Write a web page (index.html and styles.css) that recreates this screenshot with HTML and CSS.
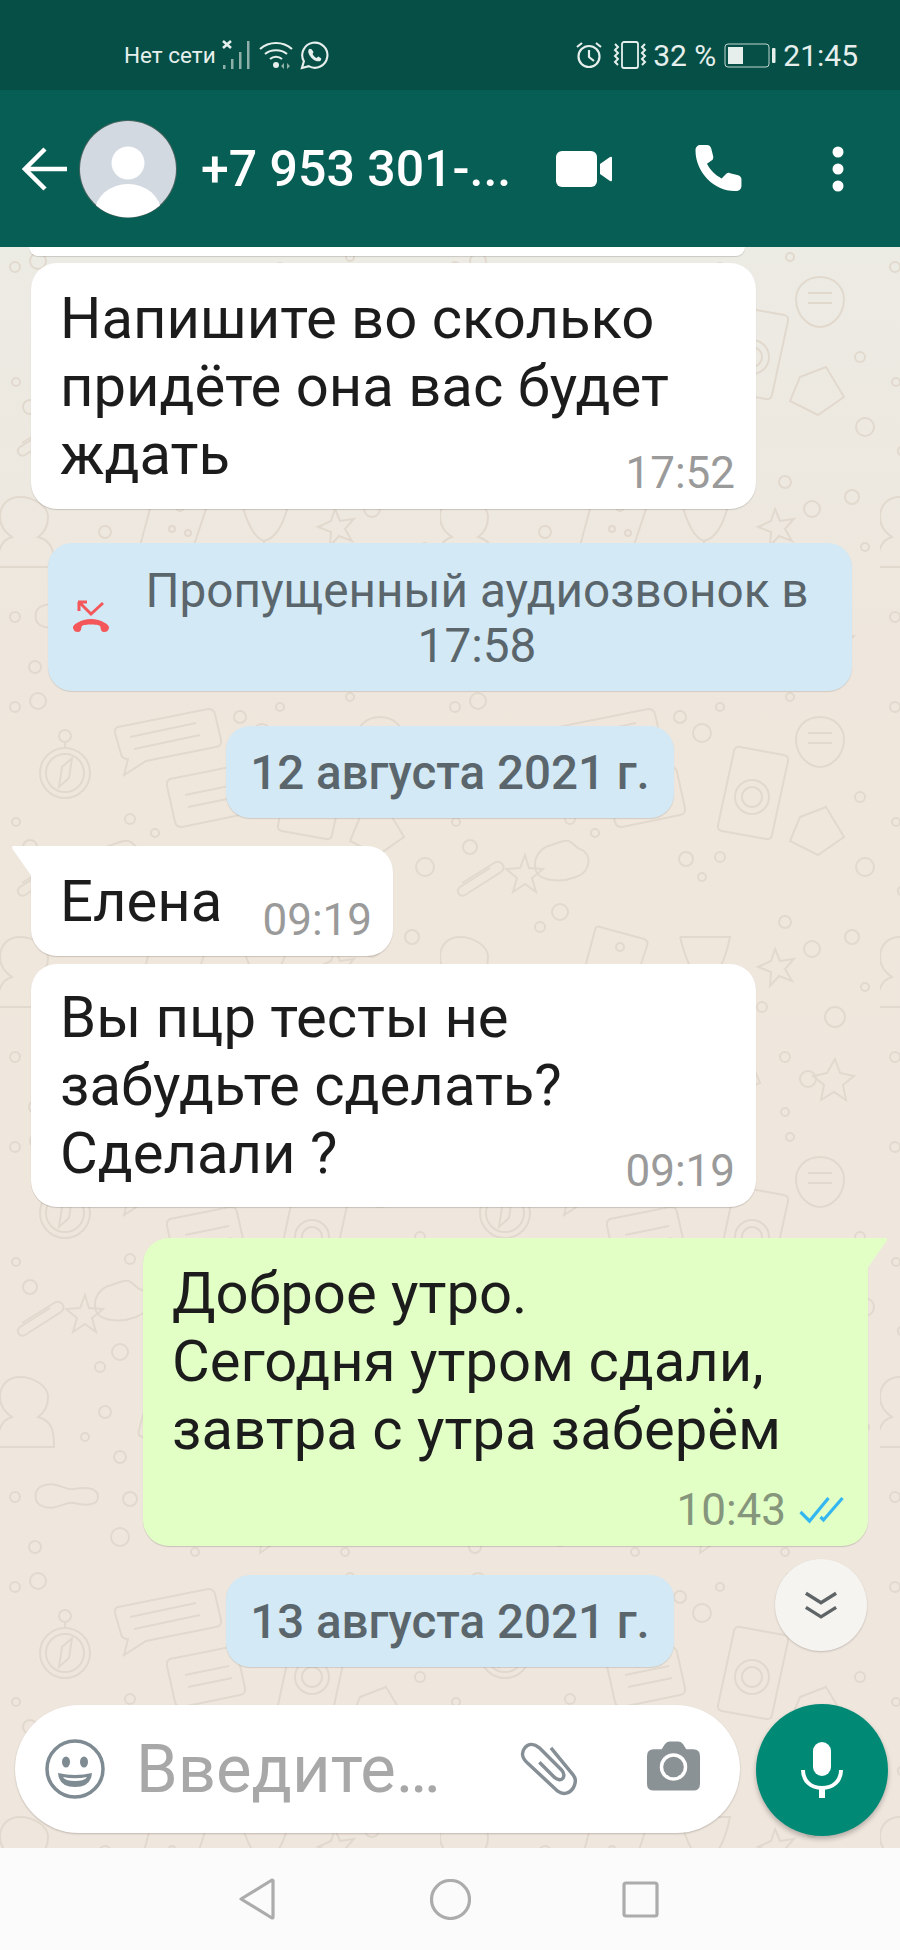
FILE: index.html
```html
<!DOCTYPE html>
<html lang="ru">
<head>
<meta charset="utf-8">
<title>WhatsApp</title>
<link rel="stylesheet" href="styles.css">
</head>
<body>
<div class="phone">
  <div class="status">
    <div class="status-left">
      <span class="status-net">Нет сети</span>
      <svg class="ic-signal" viewBox="0 0 30 30"><path d="M1 1l8 7M9 1L1 8" stroke="#e6efec" stroke-width="2.600"/><g fill="#8fb0a8"><rect x="1" y="25" width="2.500" height="4"/><rect x="9" y="19" width="2.500" height="10"/><rect x="17" y="12" width="2.500" height="17"/><rect x="25" y="1" width="2.500" height="28"/></g></svg>
      <svg class="ic-wifi" viewBox="0 0 34 28"><g fill="none" stroke="#e6efec" stroke-width="2.200"><path d="M1 8c9-8 23-8 32 0"/><path d="M6 13c6-5 16-5 22 0"/><path d="M11 18c3.500-3 8.500-3 12 0"/></g><circle cx="17" cy="24" r="3" fill="#e6efec"/><path d="M25 22v6l-3-3zM28 22v6l3-3z" fill="#8fb0a8"/></svg>
      <svg class="ic-wa" viewBox="0 0 30 30"><path d="M2 28l2-7A13 13 0 1 1 9 26z" fill="none" stroke="#e6efec" stroke-width="2.200"/><path d="M10 8c-2 1-2 4 0 7 2 3 5 6 9 6 2 0 3-1 3-3l-3-2-2 1.500c-2-1-3-2-4-4l1-2-2-3z" fill="#e6efec"/></svg>
    </div>
    <div class="status-right">
      <svg class="ic-alarm" viewBox="0 0 28 28"><circle cx="14" cy="15.500" r="10.500" fill="none" stroke="#e6efec" stroke-width="2.200"/><path d="M14 9v7l5 4M2 6l5-4M26 6l-5-4" fill="none" stroke="#e6efec" stroke-width="2.200"/></svg>
      <svg class="ic-vib" viewBox="0 0 36 28"><rect x="10" y="1" width="16" height="26" rx="2" fill="none" stroke="#e6efec" stroke-width="1.800"/><path d="M3 3l3 3-3 3 3 3-3 3 3 3-3 3 3 3M33 3l-3 3 3 3-3 3 3 3-3 3 3 3-3 3" fill="none" stroke="#e6efec" stroke-width="2"/></svg>
      <span class="status-pct">32 %</span>
      <svg class="ic-batt" viewBox="0 0 52 25"><rect x="1" y="1" width="44" height="23" rx="3" fill="none" stroke="#c3d6d1" stroke-width="1"/><rect x="4" y="4" width="15" height="17" fill="#e6efec"/><rect x="48" y="5" width="3.500" height="15" rx="1" fill="#e6efec"/></svg>
      <span class="status-time">21:45</span>
    </div>
  </div>

  <header class="topbar">
    <svg class="ic-back" viewBox="0 0 46 46"><path d="M3 23h42M23 3L3 23l20 20" fill="none" stroke="#fff" stroke-width="4.500"/></svg>
    <svg class="avatar" viewBox="0 0 98 98"><defs><clipPath id="av"><circle cx="49" cy="49" r="48.500"/></clipPath></defs><circle cx="49" cy="49" r="49" fill="#48645f"/><circle cx="49" cy="49" r="48" fill="#d2d9e0"/><circle cx="49" cy="43" r="16.500" fill="#fff"/><ellipse cx="49" cy="92" rx="33" ry="28" fill="#fff" clip-path="url(#av)"/></svg>
    <div class="contact">+7 953 301-...</div>
    <svg class="ic-video" viewBox="0 0 58 38"><rect x="1" y="1" width="41" height="36" rx="6" fill="#fff"/><path d="M45 14l10-7q2-1 2 1v22q0 2-2 1l-10-7z" fill="#fff"/></svg>
    <svg class="ic-phone" viewBox="3 1 45 45"><path d="M3 6c0-3 2-5 5-5h6c2 0 3 1 4 3l2 8c0 2 0 3-2 4l-4 3c3 6 8 11 14 14l4-4c1-1 2-2 4-1l8 2c2 1 3 2 3 4v6c0 3-2 5-5 5C22 46 3 28 3 6z" fill="#fff"/></svg>
    <svg class="ic-more" viewBox="0 0 12 46"><circle cx="6" cy="6" r="5.500" fill="#fff"/><circle cx="6" cy="23" r="5.500" fill="#fff"/><circle cx="6" cy="40" r="5.500" fill="#fff"/></svg>
  </header>

  <main class="chat">
    <svg class="wallpaper" width="900" height="1601" aria-hidden="true">
      <defs>
        <pattern id="doodle" width="440" height="440" patternUnits="userSpaceOnUse">
          <g fill="none" stroke="#e2d9ce" stroke-width="2">
            <circle cx="65" cy="86" r="25"/><circle cx="65" cy="86" r="19"/><path d="M59 100l3-20 10-9-3 20zM65 61v-6"/><circle cx="65" cy="49" r="6"/>
            <path d="M118 40l90-18q6 0 7 5l6 26q1 6-5 7l-70 14-22 14 4-16q-6 0-7-5l-6-21q-1-5 3-6zM130 50l66-14M134 62l66-14"/>
            <path d="M170 92l60-12q6 0 7 5l8 36q1 6-5 7l-58 12q-6 0-7-5l-8-36q-1-5 3-7zM185 108l44-9M188 120l44-9"/>
            <path d="M112 158c-12 2-20 14-16 26 4 10 24 12 40 6 16-6 16-24 4-28-6-2-8-10-16-8-8 2-8 2-12 4z"/>
            <path d="M85 168l4 13 14 1-11 9 4 14-11-8-12 8 4-14-11-9 14-1z"/>
            <path d="M22 196l32-20c7-4 13 4 7 9l-36 23c-5 3-10-4-5-8l30-19"/>
            <circle cx="15" cy="20" r="5"/><circle cx="38" cy="14" r="8"/><circle cx="16" cy="135" r="4"/><circle cx="30" cy="160" r="7"/><circle cx="130" cy="132" r="5"/><circle cx="155" cy="146" r="4"/>
            <circle cx="240" cy="30" r="6"/><circle cx="262" cy="46" r="9"/><circle cx="280" cy="20" r="4"/><circle cx="246" cy="172" r="7"/><circle cx="262" cy="190" r="4"/><circle cx="350" cy="10" r="4"/><circle cx="280" cy="170" r="5"/>
            <path d="M300 60l44 8q5 1 4 6l-16 74q-1 5-6 4l-44-8q-5-1-4-6l16-74q1-5 6-4z"/><circle cx="312" cy="110" r="17"/><circle cx="312" cy="110" r="10"/>
            <path d="M380 30c-14 0-24 10-24 22 0 18 14 28 24 28s24-10 24-28c0-12-10-22-24-22zM368 46h24M368 56h24"/>
            <path d="M360 130l26-10 18 30-26 18-28-14z"/><circle cx="420" cy="110" r="5"/><circle cx="425" cy="180" r="9"/>
            <path d="M20 250c-12 0-20 8-20 20 0 10 6 16 12 20-14 4-14 18-14 30h56c0-12 0-26-16-30 6-4 10-10 10-20 0-12-16-20-28-20z"/>
            <circle cx="100" cy="240" r="5"/><circle cx="120" cy="225" r="8"/><circle cx="85" cy="310" r="4"/><circle cx="120" cy="330" r="6"/><circle cx="105" cy="285" r="6"/>
            <path d="M160 240l44 12q5 2 3 7l-20 60q-2 5-7 3l-38-12q-5-2-3-7l16-60q1-5 5-3z"/><circle cx="180" cy="260" r="4"/><circle cx="172" cy="282" r="3"/><circle cx="188" cy="286" r="3"/>
            <path d="M240 250q10 40 24 44 0 12-2 20m-20 4h40m-42-68h50q-8 40-26 44"/>
            <path d="M335 262l5 12 14-2-9 10 7 12-13-5-9 10 1-14-13-5 13-6z"/><circle cx="345" cy="235" r="6"/><circle cx="372" cy="262" r="8"/><circle cx="322" cy="320" r="5"/>
            <circle cx="412" cy="250" r="7"/><circle cx="395" cy="330" r="10"/><circle cx="425" cy="300" r="4"/>
            <path d="M40 360c14-8 24 4 34 2 10-2 24-2 24 8s-16 8-24 6c-10-2-20 10-34 2-6-4-6-14 0-18z"/>
            <circle cx="15" cy="370" r="5"/><circle cx="130" cy="372" r="7"/><circle cx="155" cy="360" r="4"/><circle cx="120" cy="410" r="9"/><circle cx="35" cy="420" r="6"/>
            <path d="M180 365c-8-14 10-22 20-12 10-10 28-2 20 12l-20 24z"/>
            <path d="M250 372l52-20 18 44-40 16-20 14 2-16-12-38z"/><path d="M262 380l36-14M268 394l36-14"/>
            <circle cx="345" cy="370" r="5"/><circle cx="368" cy="392" r="8"/><path d="M395 372l5 14 14 3-11 9 3 15-12-8-13 8 3-15-11-9 14-3z"/><circle cx="345" cy="425" r="4"/><circle cx="195" cy="425" r="4"/>
          </g>
        </pattern>
      </defs>
      <rect width="900" height="1601" fill="url(#doodle)"/>
    </svg>

    <div class="thread">
      <div class="clip-top"></div>
      <div class="msg msg-in msg-tall">
        <p class="msg-text"><span class="msg-line">Напишите во сколько</span> <span class="msg-line">придёте она вас будет</span> <span class="msg-line">ждать</span></p>
        <span class="msg-time">17:52</span>
      </div>
      <div class="notice notice-call">
        <svg class="ic-missed" viewBox="0 0 38 34"><path d="M7 12V3M6 3h9M7 3l12 12L31 4" fill="none" stroke="#f4575a" stroke-width="3"/><path d="M1 29c-1-3 8-9 18-9s19 6 18 9c-1 3-2 4-5 4-4 0-3-5-4-6-2-2-16-2-18 0-1 1 0 6-4 6-3 0-4-1-5-4z" fill="#f4575a"/></svg>
        <p class="notice-text">Пропущенный аудиозвонок в 17:58</p>
      </div>
      <div class="notice notice-date">12 августа 2021 г.</div>
      <div class="msg msg-in msg-short">
        <svg class="tail tail-left" viewBox="0 0 20 30"><path d="M20 0H3Q-1 0 1 3l19 27z" fill="#fff"/></svg>
        <p class="msg-text">Елена</p>
        <span class="msg-time">09:19</span>
      </div>
      <div class="msg msg-in msg-tall msg-second">
        <p class="msg-text"><span class="msg-line">Вы пцр тесты не</span> <span class="msg-line">забудьте сделать?</span> <span class="msg-line">Сделали ?</span></p>
        <span class="msg-time">09:19</span>
      </div>
      <div class="msg msg-out">
        <svg class="tail tail-right" viewBox="0 0 20 30"><path d="M0 0h17q4 0 2 3L0 30z" fill="#e2ffc6"/></svg>
        <p class="msg-text">Доброе утро.<br>Сегодня утром сдали,<br>завтра с утра заберём</p>
        <div class="msg-meta">
          <span class="msg-time">10:43</span>
          <svg class="ic-ticks" viewBox="0 0 46 30"><path d="M2 17l9 9L30 3M22 22l3 3L44 3" fill="none" stroke="#34b7f1" stroke-width="3.200"/></svg>
        </div>
      </div>
      <div class="notice notice-date notice-date-2">13 августа 2021 г.</div>
    </div>

    <div class="scroll-down">
      <svg viewBox="0 0 36 32"><path d="M2 3l16 10L34 3M2 18l16 10 16-10" fill="none" stroke="#5f6466" stroke-width="3.600"/></svg>
    </div>

    <div class="composer">
      <div class="field">
        <svg class="ic-emoji" viewBox="0 0 60 60"><circle cx="30" cy="30" r="28" fill="none" stroke="#7f8b92" stroke-width="3.500"/><ellipse cx="21" cy="23" rx="4" ry="5.500" fill="#7f8b92"/><ellipse cx="39" cy="23" rx="4" ry="5.500" fill="#7f8b92"/><path d="M13 34q17 4 34 0-1 14-17 14T13 34z" fill="#7f8b92"/><path d="M18 38q12 2.500 24 0-2 4-12 4t-12-4z" fill="#fff"/></svg>
        <span class="placeholder">Введите…</span>
        <svg class="ic-clip" viewBox="0 0 60 56"><path d="M32 6l23 28c5 6 1 17-7 19-3 1-6 0-9-2L8 22C2 17 1 11 5 6s10-4 15 0l23 23c3 3 3 7 1 9s-6 1-9-2L20 21" fill="none" stroke="#858f95" stroke-width="3.600"/></svg>
        <svg class="ic-camera" viewBox="0 0 56 52"><path d="M8 9h8l3-5q2-3 5-3h9q3 0 5 3l3 5h7q7 0 7 7v28q0 7-7 7H8q-7 0-7-7V16q0-7 7-7z" fill="#8a9296"/><circle cx="28" cy="27" r="14" fill="#fff"/><circle cx="28" cy="27" r="10.500" fill="#8a9296"/></svg>
      </div>
      <div class="mic">
        <svg viewBox="0 0 42 58"><rect x="12" y="1" width="18" height="34" rx="9" fill="#fff"/><path d="M2 29c0 11 8 18 19 18s19-7 19-18" fill="none" stroke="#fff" stroke-width="4"/><rect x="18" y="46" width="6" height="11" fill="#fff"/></svg>
      </div>
    </div>
  </main>

  <footer class="navbar">
    <svg class="nav-back" viewBox="0 0 36 42"><path d="M2 21L33 2q1 0 1 1v36q0 1-1 1z" fill="none" stroke="#acacac" stroke-width="3.200" stroke-linejoin="round"/></svg>
    <svg class="nav-home" viewBox="0 0 41 41"><circle cx="20.500" cy="20.500" r="19" fill="none" stroke="#acacac" stroke-width="3.200"/></svg>
    <svg class="nav-recent" viewBox="0 0 37 37"><rect x="2" y="2" width="33" height="33" rx="2" fill="none" stroke="#acacac" stroke-width="3.200"/></svg>
  </footer>
</div>
</body>
</html>
```

FILE: styles.css
```css
* { box-sizing: border-box; }
html, body { margin: 0; padding: 0; }
body { width: 900px; height: 1950px; overflow: hidden; font-family: Roboto, "Noto Sans", sans-serif; }
p { margin: 0; }
svg { display: block; flex: none; }

.phone { width: 900px; height: 1950px; display: flex; flex-direction: column; }

.status { height: 90px; flex: none; background: #054f46; color: #e6efec; display: flex; align-items: flex-start; justify-content: space-between; padding: 40px 42px 0 124px; }
.status-left, .status-right { display: flex; align-items: center; height: 30px; }
.status-net { font-size: 22.500px; margin-right: 6px; }
.ic-signal { width: 30px; height: 30px; margin-right: 7px; }
.ic-wifi { width: 34px; height: 28px; margin-right: 7px; }
.ic-wa { width: 29px; height: 29px; }
.ic-alarm { width: 28px; height: 28px; margin-right: 9px; }
.ic-vib { width: 36px; height: 28px; margin-right: 5px; }
.status-pct { font-size: 30px; margin-right: 8px; }
.ic-batt { width: 52px; height: 25px; margin-right: 7px; }
.status-time { font-size: 30px; }

.topbar { height: 157px; flex: none; background: #075e54; display: flex; align-items: center; padding-left: 22px; }
.ic-back { width: 46px; height: 46px; margin-right: 11px; }
.avatar { width: 98px; height: 98px; margin-right: 24px; }
.contact { width: 319px; color: #fff; font-size: 50px; font-weight: 500; white-space: nowrap; }
.ic-video { width: 58px; height: 38px; margin-left: 35px; }
.ic-phone { width: 48px; height: 47px; margin-left: 82px; }
.ic-more { width: 12px; height: 46px; margin-left: 89px; }

.chat { position: relative; flex: 1; min-height: 0; overflow: hidden; display: flex; flex-direction: column; justify-content: space-between; background: linear-gradient(180deg, #ecebe4 0%, #efe6dc 30%, #efe6dd 100%); }
.wallpaper { position: absolute; inset: 0; }
.thread { position: relative; display: flex; flex-direction: column; }
.clip-top { width: 716px; height: 9px; margin-left: 29px; background: #fff; border-radius: 0 0 26px 26px; box-shadow: 0 1px 1px rgba(0,0,0,.15); }

.msg { position: relative; border-radius: 26px; box-shadow: 0 1px 1px rgba(0,0,0,.16); color: #1c1c1c; font-size: 58px; line-height: 68px; }
.msg-line { display: block; }
.msg-in { background: #fff; margin-left: 31px; }
.msg-tall { width: 725px; padding: 21px 40px 0 29px; height: 246px; margin-top: 7px; }
.msg-second { margin-top: 8px; height: 243px; padding-top: 19px; }
.msg-short { width: 362px; height: 110px; padding: 21px 0 0 29px; margin-top: 28px; border-top-left-radius: 0; }
.msg-time { position: absolute; right: 21px; bottom: 14px; color: #9a9a9a; font-size: 44px; line-height: 44px; }
.tail { position: absolute; width: 21px; height: 30px; top: 0; }
.tail-left { left: -20px; }
.tail-right { right: -20px; }

.msg-out { width: 725px; height: 308px; margin: 31px 0 0 143px; padding: 21px 0 0 29px; background: #e2ffc6; border-top-right-radius: 0; }
.msg-meta { position: absolute; right: 23px; bottom: 14px; display: flex; align-items: center; gap: 12px; }
.msg-out .msg-time { position: static; color: #85967c; }
.ic-ticks { width: 47px; height: 30px; }

.notice { background: #d3e9f5; color: #5a666c; border-radius: 24px; box-shadow: 0 1px 1px rgba(0,0,0,.12); }
.notice-call { width: 804px; height: 148px; margin: 34px 0 0 48px; display: flex; padding: 21px 0 0 24px; font-size: 47.700px; line-height: 55px; }
.ic-missed { width: 38px; height: 34px; margin-top: 35px; }
.notice-text { width: 700px; margin-left: 17px; text-align: center; }
.notice-date { align-self: center; width: 448px; height: 92px; margin-top: 35px; font-size: 47.500px; font-weight: 500; line-height: 95px; text-align: center; }
.notice-date-2 { margin-top: 29px; }

.scroll-down { position: absolute; left: 775px; top: 1312px; width: 92px; height: 92px; border-radius: 50%; background: #f5f4f1; box-shadow: 0 1px 2px rgba(0,0,0,.18); display: flex; align-items: center; justify-content: center; }
.scroll-down svg { width: 34px; height: 31px; }

.composer { position: relative; display: flex; align-items: flex-start; justify-content: space-between; padding: 0 12px 0 15px; height: 145px; }
.field { width: 725px; height: 128px; margin-top: 2px; background: #fff; border-radius: 64px; box-shadow: 0 1px 2px rgba(0,0,0,.2); display: flex; align-items: center; padding-left: 30px; }
.ic-emoji { width: 60px; height: 60px; margin-right: 31px; }
.placeholder { width: 384px; color: #a8a8a8; font-size: 67px; white-space: nowrap; }
.ic-clip { width: 58px; height: 54px; margin-right: 68px; }
.ic-camera { width: 55px; height: 52px; margin-bottom: 6px; }
.mic { width: 132px; height: 132px; margin-top: 1px; border-radius: 50%; background: #008a76; box-shadow: 0 3px 5px rgba(0,0,0,.25); display: flex; align-items: center; justify-content: center; }
.mic svg { width: 42px; height: 58px; }

.navbar { height: 102px; flex: none; background: #fbfbfb; display: flex; align-items: center; justify-content: center; padding-right: 2px; }
.nav-back { width: 36px; height: 42px; margin-right: 155px; }
.nav-home { width: 41px; height: 41px; margin-right: 151px; }
.nav-recent { width: 37px; height: 37px; }
```
